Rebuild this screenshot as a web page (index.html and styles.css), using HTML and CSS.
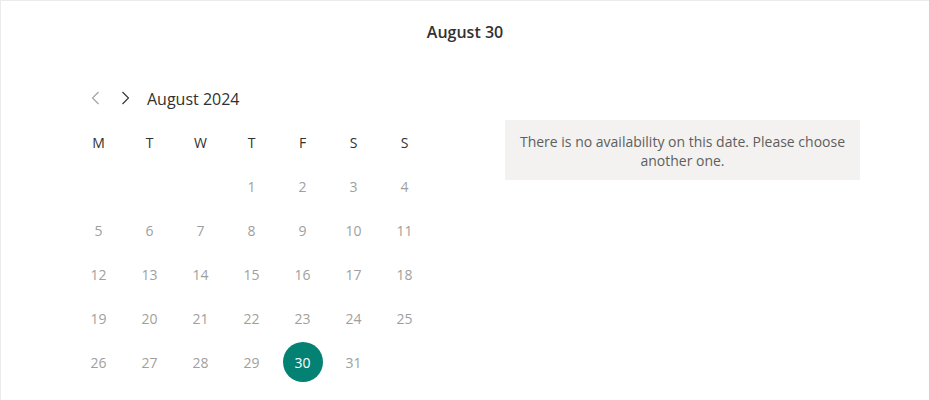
FILE: index.html
```html
<!DOCTYPE html>
<html lang="en">
<head>
    <meta charset="UTF-8">
    <meta name="viewport" content="width=device-width, initial-scale=1.0">
    <title>Booking - Select a date</title>
    <link rel="stylesheet" href="styles.css">
</head>
<body>
    <div class="page">
        <h1 class="selected-date">August 30</h1>

        <div class="booking">
            <section class="calendar">
                <div class="month-nav">
                    <button class="nav-btn nav-prev" aria-label="Previous month">
                        <svg width="16" height="16" viewBox="0 0 16 16"><polyline points="10.5,2 4.5,8 10.5,14" fill="none" stroke="currentColor" stroke-width="1.1"/></svg>
                    </button>
                    <button class="nav-btn nav-next" aria-label="Next month">
                        <svg width="16" height="16" viewBox="0 0 16 16"><polyline points="5.5,2 11.5,8 5.5,14" fill="none" stroke="currentColor" stroke-width="1.1"/></svg>
                    </button>
                    <span class="month-label">August 2024</span>
                </div>

                <div class="grid">
                    <div class="weekday">M</div>
                    <div class="weekday">T</div>
                    <div class="weekday">W</div>
                    <div class="weekday">T</div>
                    <div class="weekday">F</div>
                    <div class="weekday">S</div>
                    <div class="weekday">S</div>

                    <div class="day"></div>
                    <div class="day"></div>
                    <div class="day"></div>
                    <div class="day">1</div>
                    <div class="day">2</div>
                    <div class="day">3</div>
                    <div class="day">4</div>

                    <div class="day">5</div>
                    <div class="day">6</div>
                    <div class="day">7</div>
                    <div class="day">8</div>
                    <div class="day">9</div>
                    <div class="day">10</div>
                    <div class="day">11</div>

                    <div class="day">12</div>
                    <div class="day">13</div>
                    <div class="day">14</div>
                    <div class="day">15</div>
                    <div class="day">16</div>
                    <div class="day">17</div>
                    <div class="day">18</div>

                    <div class="day">19</div>
                    <div class="day">20</div>
                    <div class="day">21</div>
                    <div class="day">22</div>
                    <div class="day">23</div>
                    <div class="day">24</div>
                    <div class="day">25</div>

                    <div class="day">26</div>
                    <div class="day">27</div>
                    <div class="day">28</div>
                    <div class="day">29</div>
                    <div class="day"><span class="selected">30</span></div>
                    <div class="day">31</div>
                    <div class="day"></div>
                </div>
            </section>

            <section class="slots">
                <p class="no-slots">There is no availability on this date. Please choose another one.</p>
            </section>
        </div>
    </div>
</body>
</html>
```

FILE: styles.css
```css
html, body {
    margin: 0;
    padding: 0;
    background: #fff;
}
body {
    font-family: "Open Sans", "Noto Sans", Arial, sans-serif;
    color: #323130;
}
.page {
    height: 400px;
    box-sizing: border-box;
    border-top: 1px solid #edebe9;
    border-left: 1px solid #edebe9;
}
.selected-date {
    margin: 0;
    padding-top: 20px;
    font-size: 16px;
    line-height: 22px;
    font-weight: 600;
    text-align: center;
    color: #323130;
}
.booking {
    display: flex;
    margin-top: 33px;
    padding-left: 72px;
}
.calendar {
    width: 357px;
}
.month-nav {
    display: flex;
    align-items: center;
    height: 44px;
    padding-left: 15px;
}
.nav-btn {
    display: flex;
    align-items: center;
    justify-content: center;
    width: 16px;
    height: 16px;
    padding: 0;
    margin-right: 13px;
    background: none;
    border: none;
    cursor: pointer;
}
.nav-prev {
    color: #a19f9d;
}
.nav-next {
    color: #323130;
    margin-right: 14px;
}
.month-label {
    font-size: 16px;
    color: #323130;
    padding-top: 2px;
}
.grid {
    display: grid;
    grid-template-columns: repeat(7, 51px);
    grid-auto-rows: 44px;
}
.weekday, .day {
    display: flex;
    align-items: center;
    justify-content: center;
    font-size: 14px;
}
.weekday {
    color: #323130;
}
.day {
    color: #a19f9d;
}
.selected {
    display: flex;
    align-items: center;
    justify-content: center;
    width: 40px;
    height: 40px;
    border-radius: 50%;
    background-color: #038172;
    color: #fff;
}
.slots {
    margin-left: 75px;
    padding-top: 44px;
}
.no-slots {
    width: 355px;
    box-sizing: border-box;
    margin: 0;
    padding: 12px 10px 10px;
    background-color: #f3f2f1;
    color: #605e5c;
    font-size: 14px;
    line-height: 19px;
    text-align: center;
}
```
